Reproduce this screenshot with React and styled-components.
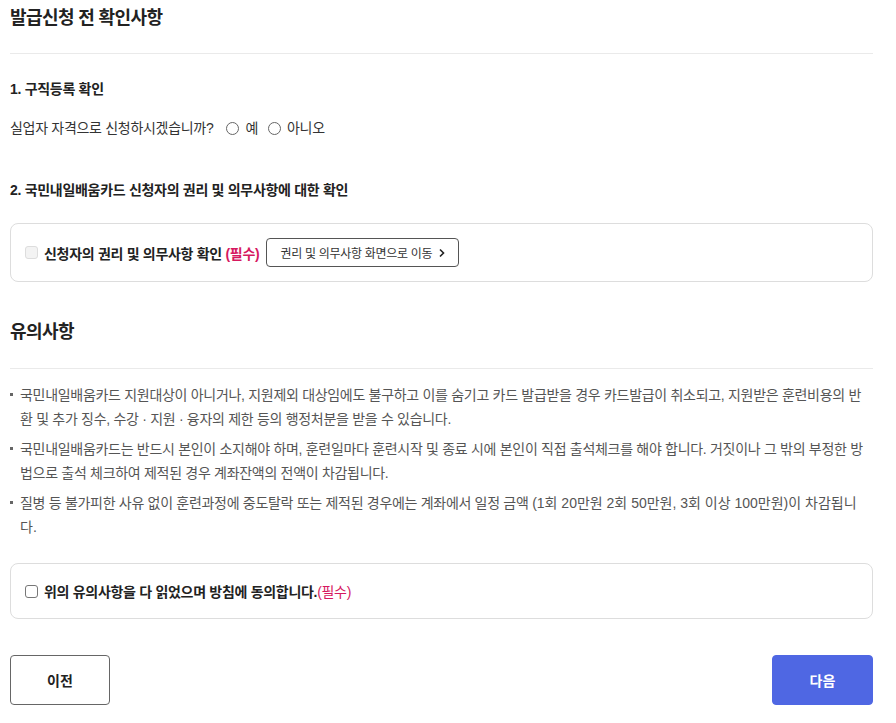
import styled, { createGlobalStyle } from "styled-components";

const GlobalStyle = createGlobalStyle`
  body {
    margin: 0;
    background: #fff;
    font-family: "Liberation Sans", "Noto Sans CJK KR", sans-serif;
    color: #333;
    letter-spacing: -0.3px;
  }
`;

const Page = styled.div`
  padding: 0 23px 0 10px;
`;

const Title = styled.h2`
  margin: 0;
  padding: 5px 0 22px;
  font-size: 18px;
  line-height: 26px;
  font-weight: 700;
  letter-spacing: -0.6px;
  color: #222;
  border-bottom: 1px solid #eaeaea;
`;

const SubHead = styled.h3`
  margin: ${({ $top }) => $top}px 0 0;
  font-size: 14px;
  line-height: 20px;
  font-weight: 700;
  color: #222;
`;

const Question = styled.div`
  display: flex;
  align-items: center;
  margin-top: 19px;
  font-size: 14px;
  line-height: 20px;
  color: #333;
`;

const RadioLabel = styled.label`
  display: inline-flex;
  align-items: center;
  gap: 6px;
  margin-left: ${({ $first }) => ($first ? 13 : 10)}px;
`;

const Radio = styled.input.attrs({ type: "radio" })`
  appearance: none;
  margin: 0;
  width: 13px;
  height: 13px;
  border: 1px solid #666;
  border-radius: 50%;
  background: #fff;
`;

const Box = styled.div`
  display: flex;
  align-items: center;
  box-sizing: border-box;
  height: ${({ $h }) => $h}px;
  margin-top: ${({ $top }) => $top}px;
  padding: 0 14px;
  border: 1px solid #ddd;
  border-radius: 8px;
`;

const Check = styled.input.attrs({ type: "checkbox" })`
  appearance: none;
  margin: 0 6px 0 0;
  width: 13px;
  height: 13px;
  border: 1px solid ${({ disabled }) => (disabled ? "#ddd" : "#777")};
  background: ${({ disabled }) => (disabled ? "#f3f3f3" : "#fff")};
  border-radius: 3px;
`;

const CheckText = styled.span`
  font-size: 14px;
  font-weight: 700;
  color: #222;
`;

const Required = styled.span`
  color: #d6195f;
  font-weight: ${({ $bold }) => ($bold ? 700 : 400)};
`;

const LinkButton = styled.button`
  display: inline-flex;
  align-items: center;
  gap: 6px;
  margin-left: 7px;
  height: 29px;
  padding: 0 12px 0 13px;
  border: 1px solid #555;
  border-radius: 4px;
  background: #fff;
  font-family: inherit;
  font-size: 12px;
  letter-spacing: -0.3px;
  color: #333;
`;

const SectionTitle = styled.h2`
  margin: 37px 0 0;
  padding: 0 0 23px;
  font-size: 18px;
  line-height: 26px;
  font-weight: 700;
  letter-spacing: -0.6px;
  color: #222;
  border-bottom: 1px solid #eaeaea;
`;

const NoticeList = styled.ul`
  margin: 14px 0 0;
  padding: 0;
  list-style: none;
`;

const NoticeItem = styled.li`
  position: relative;
  padding-left: 10px;
  margin-top: ${({ $first }) => ($first ? 0 : 6)}px;
  font-size: 14px;
  line-height: 24px;
  color: #555;

  &::before {
    content: "";
    position: absolute;
    left: 0;
    top: 10px;
    width: 3px;
    height: 3px;
    background: #666;
  }
`;

const Figures = styled.span`
  letter-spacing: 0;
`;

const Footer = styled.div`
  display: flex;
  justify-content: space-between;
  margin-top: 36px;
`;

const NavButton = styled.button`
  width: ${({ $w }) => $w}px;
  height: 50px;
  border-radius: 4px;
  border: 1px solid ${({ $primary }) => ($primary ? "#4f67e3" : "#666")};
  background: ${({ $primary }) => ($primary ? "#4f67e3" : "#fff")};
  color: ${({ $primary }) => ($primary ? "#fff" : "#222")};
  font-family: inherit;
  font-size: 14px;
  font-weight: 700;
`;

const notices = [
  "국민내일배움카드 지원대상이 아니거나, 지원제외 대상임에도 불구하고 이를 숨기고 카드 발급받을 경우 카드발급이 취소되고, 지원받은 훈련비용의 반환 및 추가 징수, 수강 · 지원 · 융자의 제한 등의 행정처분을 받을 수 있습니다.",
  "국민내일배움카드는 반드시 본인이 소지해야 하며, 훈련일마다 훈련시작 및 종료 시에 본인이 직접 출석체크를 해야 합니다. 거짓이나 그 밖의 부정한 방법으로 출석 체크하여 제적된 경우 계좌잔액의 전액이 차감됩니다.",
  <>
    질병 등 불가피한 사유 없이 훈련과정에 중도탈락 또는 제적된 경우에는 계좌에서 일정 금액{" "}
    <Figures>(1회 20만원 2회 50만원, 3회 이상 100만원)이 차감됩니다.</Figures>
  </>,
];

const Chevron = () => (
  <svg width="8" height="10" viewBox="0 0 8 10" fill="none">
    <path d="M2 1.5 L5.5 5 L2 8.5" stroke="#222" strokeWidth="1.6" />
  </svg>
);

export default function App() {
  return (
    <Page>
      <GlobalStyle />
      <Title>발급신청 전 확인사항</Title>

      <SubHead $top={25}>1. 구직등록 확인</SubHead>
      <Question>
        실업자 자격으로 신청하시겠습니까?
        <RadioLabel $first>
          <Radio name="jobless" />예
        </RadioLabel>
        <RadioLabel>
          <Radio name="jobless" />아니오
        </RadioLabel>
      </Question>

      <SubHead $top={42}>2. 국민내일배움카드 신청자의 권리 및 의무사항에 대한 확인</SubHead>
      <Box $h={59} $top={23}>
        <Check disabled />
        <CheckText>
          신청자의 권리 및 의무사항 확인 <Required $bold>(필수)</Required>
        </CheckText>
        <LinkButton>
          권리 및 의무사항 화면으로 이동 <Chevron />
        </LinkButton>
      </Box>

      <SectionTitle>유의사항</SectionTitle>
      <NoticeList>
        {notices.map((text, i) => (
          <NoticeItem key={i} $first={i === 0}>
            {text}
          </NoticeItem>
        ))}
      </NoticeList>

      <Box $h={56} $top={24}>
        <Check />
        <CheckText>
          위의 유의사항을 다 읽었으며 방침에 동의합니다.<Required>(필수)</Required>
        </CheckText>
      </Box>

      <Footer>
        <NavButton $w={100}>이전</NavButton>
        <NavButton $w={101} $primary>
          다음
        </NavButton>
      </Footer>
    </Page>
  );
}
